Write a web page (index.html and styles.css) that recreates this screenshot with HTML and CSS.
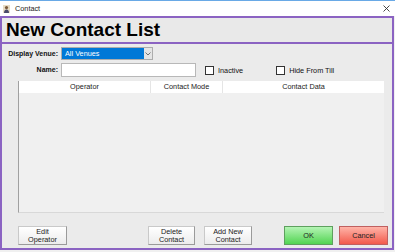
FILE: index.html
```html
<!DOCTYPE html>
<html lang="en">
<head>
  <meta charset="UTF-8" />
  <title>Contact</title>
  <link rel="stylesheet" href="styles.css">
</head>
<body>
  <div class="titlebar">
    <svg class="app-icon" width="7" height="8" viewBox="0 0 7 8">
      <rect x="0" y="0" width="7" height="8" fill="#e8dcc4"/>
      <circle cx="3.5" cy="2.6" r="1.6" fill="#7a5a3a"/>
      <path d="M1 8 Q1 4.5 3.5 4.5 Q6 4.5 6 8 Z" fill="#4a4a6a"/>
    </svg>
    <span class="title">Contact</span>
    <svg class="close" width="7" height="7" viewBox="0 0 7 7">
      <path d="M0.5 0.5 L6.5 6.5 M6.5 0.5 L0.5 6.5" stroke="#333" stroke-width="0.9"/>
    </svg>
  </div>

  <div class="frame">
    <div class="header">New Contact List</div>
    <div class="content">
      <div class="row venue-row">
        <label class="label">Display Venue:</label>
        <div class="select">
          <span class="select-value">All Venues</span>
          <span class="select-btn">
            <svg width="6" height="4" viewBox="0 0 6 4"><path d="M0.5 0.5 L3 3 L5.5 0.5" fill="none" stroke="#555" stroke-width="0.8"/></svg>
          </span>
        </div>
      </div>
      <div class="row name-row">
        <label class="label">Name:</label>
        <div class="input"></div>
        <div class="check check-inactive"><span class="box"></span>Inactive</div>
        <div class="check check-till"><span class="box"></span>Hide From Till</div>
      </div>

      <div class="grid">
        <div class="grid-head">
          <div class="col col-op">Operator</div>
          <div class="col col-mode">Contact Mode</div>
          <div class="col col-data">Contact Data</div>
        </div>
        <div class="grid-body"></div>
      </div>

      <div class="buttons">
        <button class="btn btn-edit">Edit<br>Operator</button>
        <button class="btn btn-delete">Delete<br>Contact</button>
        <button class="btn btn-add">Add New<br>Contact</button>
        <button class="btn btn-ok">OK</button>
        <button class="btn btn-cancel">Cancel</button>
      </div>
    </div>
  </div>
</body>
</html>
```

FILE: styles.css
```css
body {
  margin: 0;
  padding: 0;
  width: 395px;
  height: 252px;
  background: #f0f0f0;
  font-family: 'Liberation Sans', Arial, sans-serif;
  color: #111;
  overflow: hidden;
}
.titlebar {
  height: 15px;
  border-top: 1px solid #69a9e6;
  background: #fff;
  display: flex;
  align-items: center;
  padding-left: 3px;
}
.app-icon {
  margin-top: 1px;
}
.title {
  font-size: 7.3px;
  margin-left: 5px;
  color: #222;
}
.close {
  margin-left: auto;
  margin-right: 5px;
}
.frame {
  width: 390px;
  height: 230px;
  border: 2px solid #8b63c2;
  background: #ebebeb;
  display: flex;
  flex-direction: column;
}
.header {
  height: 24px;
  border-bottom: 2px solid #8b63c2;
  background: #e9e9e9;
  font-size: 19px;
  font-weight: bold;
  line-height: 24px;
  padding-left: 4px;
  color: #000;
}
.content {
  flex: 1;
  display: flex;
  flex-direction: column;
  font-size: 7.3px;
}
.row {
  display: flex;
  align-items: center;
}
.venue-row {
  margin-top: 3px;
  height: 13px;
}
.name-row {
  margin-top: 3px;
  height: 13px;
}
.label {
  width: 55px;
  margin-left: 1px;
  margin-right: 3px;
  text-align: right;
  font-weight: bold;
  font-size: 7px;
}
.select {
  width: 90px;
  height: 11px;
  border: 1px solid #adadad;
  background: #0078d7;
  display: flex;
}
.select-value {
  flex: 1;
  color: #fff;
  padding-left: 3px;
  line-height: 11px;
}
.select-btn {
  width: 8px;
  background: #e5e5e5;
  display: flex;
  align-items: center;
  justify-content: center;
}
.input {
  width: 133px;
  height: 12px;
  border: 1px solid #b8b8b8;
  background: #fff;
}
.check {
  display: flex;
  align-items: center;
  margin-top: 1px;
}
.check .box {
  width: 7px;
  height: 7px;
  border: 1px solid #333;
  background: #fff;
  margin-right: 4px;
}
.check-inactive {
  margin-left: 9px;
}
.check-till {
  margin-left: 33px;
}
.grid {
  margin: 5px 8px 0 16px;
  height: 131px;
  border-left: 1px solid #a0a0a0;
  border-bottom: 1px solid #d8d8d8;
  background: #f0f0f0;
  display: flex;
  flex-direction: column;
}
.grid-head {
  height: 12px;
  background: #fff;
  display: flex;
  line-height: 12px;
}
.col {
  text-align: center;
  color: #222;
}
.col-op {
  width: 131px;
  border-right: 1px solid #e5e5e5;
}
.col-mode {
  width: 71px;
  border-right: 1px solid #e5e5e5;
}
.col-data {
  flex: 1;
}
.grid-body {
  flex: 1;
}
.buttons {
  display: flex;
  margin-top: 13px;
}
.btn {
  height: 19px;
  padding: 0;
  font-family: 'Liberation Sans', Arial, sans-serif;
  font-size: 7.3px;
  line-height: 8px;
  color: #222;
  border: 1px solid #c9c9c9;
  border-right-color: #9a9a9a;
  border-bottom-color: #9a9a9a;
  background: linear-gradient(#ffffff, #ececec);
}
.btn-edit {
  width: 49px;
  margin-left: 16px;
}
.btn-delete {
  width: 47px;
  margin-left: 81px;
}
.btn-add {
  width: 48px;
  margin-left: 9px;
}
.btn-ok {
  width: 49px;
  margin-left: 32px;
  border-color: #5ea05e;
  background: linear-gradient(#b4f4b4, #52d452);
}
.btn-cancel {
  width: 49px;
  margin-left: 6px;
  border-color: #c06060;
  background: linear-gradient(#ffb4a8, #f25a4c);
}
```
